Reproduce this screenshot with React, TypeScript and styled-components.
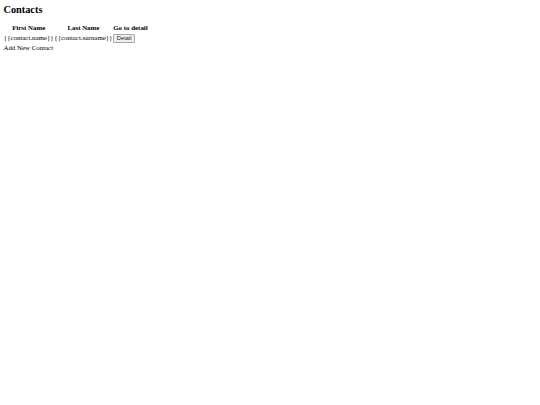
import React from "react";
import styled, { createGlobalStyle } from "styled-components";

const S = 0.43;
const px = (v: number) => `${(v * S).toFixed(2)}px`;

const Global = createGlobalStyle`
  html, body { background: #ffffff; }
  body {
    margin: ${px(8)};
    font-family: "Liberation Serif", "Times New Roman", serif;
    font-size: ${px(16)};
    line-height: 1.27;
    color: #000000;
  }
`;

const Title = styled.h2`
  margin: 1px 0 7px;
  font-size: ${px(24)};
  line-height: 1.2;
  font-weight: bold;
`;

const Table = styled.table`
  border-collapse: separate;
  border-spacing: ${px(2)};
`;

const HeadCell = styled.th`
  padding: ${px(1)};
  font-weight: bold;
  text-align: center;
`;

const Cell = styled.td`
  padding: ${px(1)};
`;

const DetailButton = styled.button`
  font-family: "Liberation Sans", Arial, sans-serif;
  font-size: ${px(13.333)};
  padding: ${px(1.5)} ${px(6)};
  border: 1px solid #a8a8a8;
  border-radius: 1px;
  background: #efefef;
  color: #222222;
  line-height: normal;
`;

const AddNew = styled.div``;

const contacts = [{ name: "{{contact.name}}", surname: "{{contact.surname}}" }];

export default function App() {
  return (
    <>
      <Global />
      <Title>Contacts</Title>
      <Table>
        <thead>
          <tr>
            <HeadCell>First Name</HeadCell>
            <HeadCell>Last Name</HeadCell>
            <HeadCell>Go to detail</HeadCell>
          </tr>
        </thead>
        <tbody>
          {contacts.map((c, i) => (
            <tr key={i}>
              <Cell>{c.name}</Cell>
              <Cell>{c.surname}</Cell>
              <Cell>
                <DetailButton>Detail</DetailButton>
              </Cell>
            </tr>
          ))}
        </tbody>
      </Table>
      <AddNew>Add New Contact</AddNew>
    </>
  );
}
